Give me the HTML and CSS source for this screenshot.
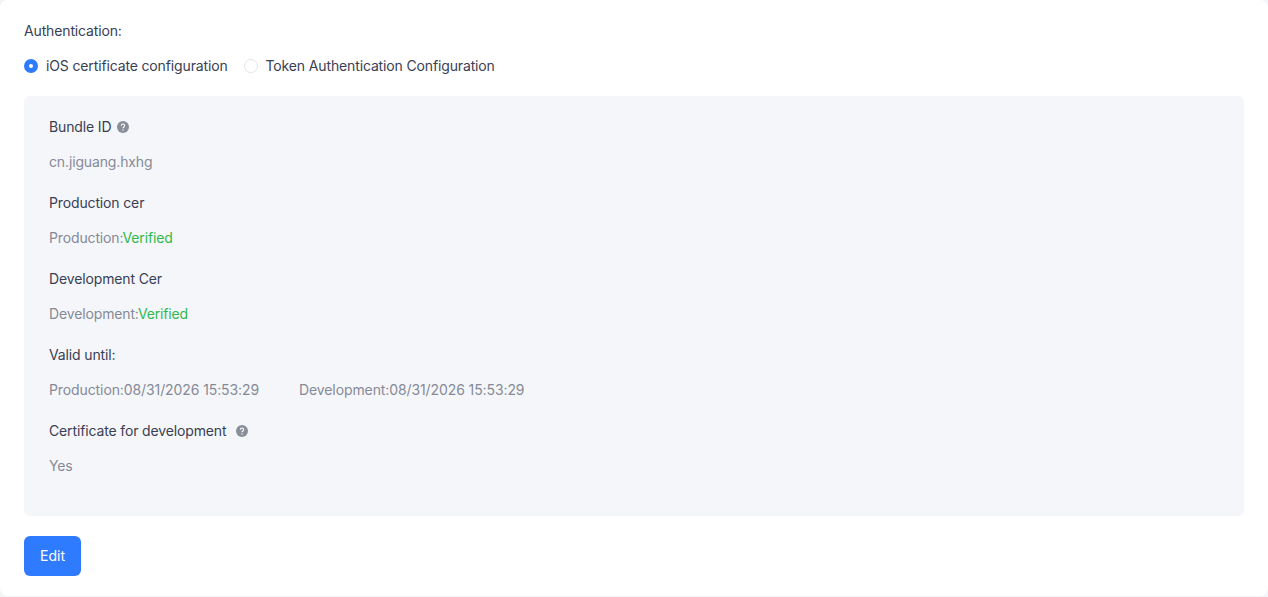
FILE: index.html
```html
<!DOCTYPE html>
<html>
	<head>
		<meta charset="UTF-8">
		<title>Authentication</title>
		<link rel="stylesheet" href="styles.css">
	</head>
	<body>
		<div class="card">
			<div class="auth-title">Authentication:</div>
			<div class="radio-group">
				<label class="radio checked"><span class="radio-dot"></span>iOS certificate configuration</label>
				<label class="radio"><span class="radio-dot"></span>Token Authentication Configuration</label>
			</div>
			<div class="panel">
				<div class="item">
					<div class="item-label">Bundle ID
						<svg class="help help-near" viewBox="0 0 12 12"><circle cx="6" cy="6" r="6" fill="#8a8e99"/><path d="M4.4 4.7a1.6 1.6 0 1 1 2.5 1.3c-.6.4-.9.7-.9 1.3" fill="none" stroke="#fff" stroke-width="1.1"/><circle cx="6" cy="9" r=".7" fill="#fff"/></svg>
					</div>
					<div class="item-value">cn.jiguang.hxhg</div>
				</div>
				<div class="item">
					<div class="item-label">Production cer</div>
					<div class="item-value">Production:<span class="ok">Verified</span></div>
				</div>
				<div class="item">
					<div class="item-label">Development Cer</div>
					<div class="item-value">Development:<span class="ok">Verified</span></div>
				</div>
				<div class="item">
					<div class="item-label">Valid until:</div>
					<div class="item-value dates"><span>Production:08/31/2026 15:53:29</span><span>Development:08/31/2026 15:53:29</span></div>
				</div>
				<div class="item">
					<div class="item-label">Certificate for development
						<svg class="help" viewBox="0 0 12 12"><circle cx="6" cy="6" r="6" fill="#8a8e99"/><path d="M4.4 4.7a1.6 1.6 0 1 1 2.5 1.3c-.6.4-.9.7-.9 1.3" fill="none" stroke="#fff" stroke-width="1.1"/><circle cx="6" cy="9" r=".7" fill="#fff"/></svg>
					</div>
					<div class="item-value">Yes</div>
				</div>
			</div>
			<button class="btn">Edit</button>
		</div>
	</body>
</html>
```

FILE: styles.css
```css
*{
	margin:0;
	padding:0;
	box-sizing:border-box;
}
body{
	background:#f3f4f8;
	font-family:Inter,"Liberation Sans",sans-serif;
	font-size:14px;
	line-height:22px;
	letter-spacing:-0.14px;
	color:#394053;
}
.card{
	height:596px;
	background:#fff;
	border-radius:8px;
	padding:20px 24px;
}
.radio-group{
	display:flex;
	gap:16px;
	margin-top:13px;
}
.radio{
	display:flex;
	align-items:center;
	gap:8px;
}
.radio-dot{
	width:14px;
	height:14px;
	border:1px solid #e3e5ea;
	border-radius:50%;
	background:#fff;
}
.checked .radio-dot{
	border:5px solid #2f7bff;
}
.panel{
	margin-top:19px;
	height:420px;
	padding:20px 25px;
	background:#f5f6fa;
	border-radius:6px;
}
.item{
	margin-bottom:19px;
}
.item-label{
	display:flex;
	align-items:center;
}
.item-value{
	margin-top:13px;
	color:#858a97;
}
.ok{
	color:#30b94d;
}
.dates{
	display:flex;
	gap:40px;
	letter-spacing:-0.1px;
}
.help{
	width:12px;
	height:12px;
	margin-left:10px;
}
.help-near{
	margin-left:6px;
}
.btn{
	display:block;
	margin-top:20px;
	height:40px;
	padding:0 16px;
	border:none;
	border-radius:6px;
	background:#2f7bff;
	color:#fff;
	font:14px/38px Inter,"Liberation Sans",sans-serif;
}
```
